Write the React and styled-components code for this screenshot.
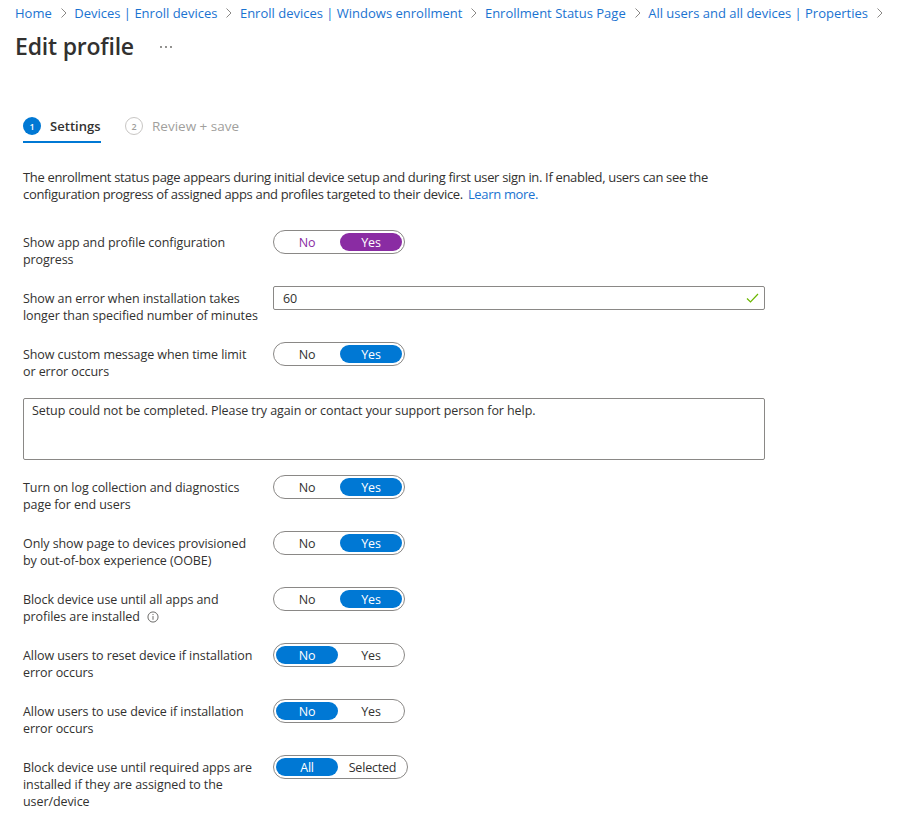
import React from "react";
import styled, { createGlobalStyle } from "styled-components";

const Global = createGlobalStyle`
  html, body { margin: 0; padding: 0; background: #fff; }
  body { font-family: "Open Sans", "Noto Sans", "Liberation Sans", sans-serif; color: #323130; }
`;
const Page = styled.div`
  width: 903px; height: 829px; overflow: hidden; box-sizing: border-box; padding: 4px 0 0 15px;
`;
const Crumbs = styled.nav`
  display: flex; align-items: center; height: 17px; font-size: 13px; letter-spacing: 0; white-space: nowrap;
`;
const Crumb = styled.span`color: #1a73d1;`;
const Chevron = styled.svg`
  width: 8px; height: 10px; margin: 1px 6.5px 0 8px; fill: none; stroke: #8a8886; stroke-width: 1;
`;
const TitleRow = styled.div`
  display: flex; align-items: center; height: 33px; margin-top: 9px;
`;
const Title = styled.h1`
  margin: 0; font-size: 23px; font-weight: 600; letter-spacing: -0.2px; color: #323130; line-height: 33px; width: 144px;
`;
const More = styled.svg`width: 14px; height: 4px; fill: #605e5c;`;
const Body = styled.div`padding: 0 0 0 8px;`;
const Steps = styled.div`display: flex; margin-top: 41px; height: 39px;`;
const Step = styled.div`
  display: flex; align-items: center; gap: 9px; height: 39px; box-sizing: border-box; padding-top: 7px; font-size: ${p => (p.$active ? 13 : 13.5)}px;
  letter-spacing: ${p => (p.$active ? "0.05px" : "0")};
  font-weight: ${p => (p.$active ? 600 : 400)};
  color: ${p => (p.$active ? "#323130" : "#a19f9d")};
  border-bottom: 2px solid ${p => (p.$active ? "#0078d4" : "transparent")};
  margin-right: 24px;
  width: ${p => p.$w}px;
`;
const Num = styled.span`
  width: 18px; height: 18px; box-sizing: border-box; border-radius: 50%; display: flex; align-items: center; justify-content: center;
  font-size: 9px; flex: none; letter-spacing: 0; font-weight: 600;
  background: ${p => (p.$active ? "#0078d4" : "#fff")};
  color: ${p => (p.$active ? "#fff" : "#a19f9d")};
  border: ${p => (p.$active ? "none" : "1px solid #c8c6c4")};
`;
const Intro = styled.p`
  margin: 26px 0 31px; font-size: 13px; line-height: 17px; letter-spacing: -0.33px; color: #323130; width: 740px;
`;
const LearnMore = styled.span`color: #1a73d1; margin-left: 2px;`;
const Row = styled.div`
  display: grid; grid-template-columns: 250px 1fr; min-height: 34px; margin-bottom: ${p => p.$mb ?? 22}px;
`;
const Label = styled.div`
  font-size: 12.5px; line-height: 17px; letter-spacing: -0.08px; color: #323130; white-space: nowrap;
`;
const Toggle = styled.div`
  display: flex; align-items: center; gap: 2px; box-sizing: border-box; margin-top: -4px; height: 24px; padding: 0 2px;
  width: ${p => p.$w ?? 132}px; border: 1px solid #8a8886; border-radius: 12px; background: #fff;
`;
const Option = styled.div`
  flex: ${p => p.$flex ?? 1}; height: 18px; display: flex; align-items: center; justify-content: center; border-radius: 9px; font-size: 12.5px; letter-spacing: -0.2px;
  background: ${p => (p.$on ? p.$color : "transparent")};
  color: ${p => (p.$on ? "#fff" : p.$text ?? "#323130")};
`;
const InputBox = styled.div`
  position: relative; box-sizing: border-box; width: 492px; height: 24px; margin-top: -4px; border: 1px solid #8a8886; border-radius: 2px;
  display: flex; align-items: center; padding-left: 9px; font-size: 12.5px; color: #323130; letter-spacing: -0.2px;
`;
const Check = styled.svg`
  position: absolute; right: 5px; top: 5px; width: 13px; height: 12px; fill: none; stroke: #6bb700; stroke-width: 1.2;
`;
const MessageBox = styled.div`
  box-sizing: border-box; width: 742px; height: 62px; border: 1px solid #8a8886; border-radius: 2px; padding: 3px 8px; margin-bottom: 19px;
  font-size: 12.5px; line-height: 17px; letter-spacing: -0.08px; color: #323130;
`;
const Info = styled.svg`
  width: 12px; height: 12px; margin-left: 7px; vertical-align: -2px; fill: none; stroke: #605e5c;
`;

const Sep = () => (
  <Chevron viewBox="0 0 8 10"><path d="M1.5 0.5 L6 5 L1.5 9.5" /></Chevron>
);

const BLUE = "#0078d4";
const PURPLE = "#8a2ca3";

const YesNo = ({ value = "Yes", color = BLUE, text }) => (
  <Toggle>
    <Option $on={value === "No"} $color={color} $text={text}>No</Option>
    <Option $on={value === "Yes"} $color={color} $text={text}>Yes</Option>
  </Toggle>
);

export default function App() {
  return (
    <Page>
      <Global />
      <Crumbs>
        <Crumb>Home</Crumb><Sep />
        <Crumb>Devices | Enroll devices</Crumb><Sep />
        <Crumb>Enroll devices | Windows enrollment</Crumb><Sep />
        <Crumb>Enrollment Status Page</Crumb><Sep />
        <Crumb>All users and all devices | Properties</Crumb><Sep />
      </Crumbs>
      <TitleRow>
        <Title>Edit profile</Title>
        <More viewBox="0 0 14 4"><circle cx="2" cy="2" r="0.9" /><circle cx="7" cy="2" r="0.9" /><circle cx="12" cy="2" r="0.9" /></More>
      </TitleRow>
      <Body>
        <Steps>
          <Step $active $w={78}><Num $active>1</Num>Settings</Step>
          <Step $w={120}><Num>2</Num>Review + save</Step>
        </Steps>
        <Intro>
          The enrollment status page appears during initial device setup and during first user sign in. If enabled, users can see the configuration progress of assigned apps and profiles targeted to their device. <LearnMore>Learn more.</LearnMore>
        </Intro>
        <Row>
          <Label>Show app and profile configuration<br />progress</Label>
          <YesNo color={PURPLE} text={PURPLE} />
        </Row>
        <Row>
          <Label>Show an error when installation takes<br />longer than specified number of minutes</Label>
          <InputBox>60<Check viewBox="0 0 13 12"><path d="M1 6.5 L4.5 10 L12 2" /></Check></InputBox>
        </Row>
        <Row $mb={18}>
          <Label>Show custom message when time limit<br />or error occurs</Label>
          <YesNo />
        </Row>
        <MessageBox>Setup could not be completed. Please try again or contact your support person for help.</MessageBox>
        <Row>
          <Label>Turn on log collection and diagnostics<br />page for end users</Label>
          <YesNo />
        </Row>
        <Row>
          <Label>Only show page to devices provisioned<br />by out-of-box experience (OOBE)</Label>
          <YesNo />
        </Row>
        <Row>
          <Label>Block device use until all apps and<br />profiles are installed
            <Info viewBox="0 0 13 13"><circle cx="6.5" cy="6.5" r="5.5" /><path d="M6.5 5.5 V9.5 M6.5 3.2 V4.4" /></Info>
          </Label>
          <YesNo />
        </Row>
        <Row>
          <Label>Allow users to reset device if installation<br />error occurs</Label>
          <YesNo value="No" />
        </Row>
        <Row>
          <Label>Allow users to use device if installation<br />error occurs</Label>
          <YesNo value="No" />
        </Row>
        <Row>
          <Label>Block device use until required apps are<br />installed if they are assigned to the<br />user/device</Label>
          <Toggle $w={135}>
            <Option $on $color={BLUE} $flex="0 0 62px">All</Option>
            <Option $color={BLUE}>Selected</Option>
          </Toggle>
        </Row>
      </Body>
    </Page>
  );
}
